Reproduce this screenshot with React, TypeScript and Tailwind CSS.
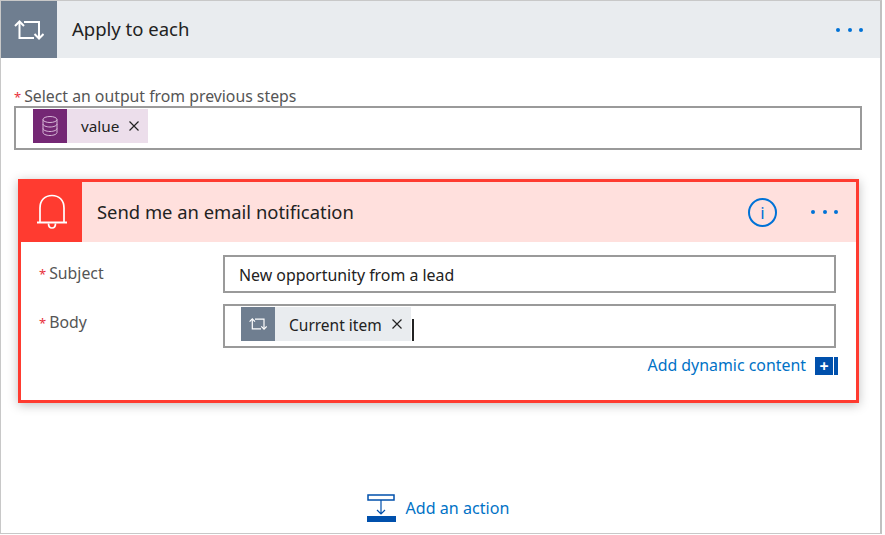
const LoopIcon = ({ className }: { className: string }) => (
  <svg viewBox="0 0 30 20" fill="none" stroke="currentColor" strokeWidth="2" className={className}>
    <path d="M5.5 2V18H20" />
    <path d="M10 2H25V18" />
    <path d="M1 6L5.5 1.5L10 6" />
    <path d="M20.5 14L25 18.5L29.5 14" />
  </svg>
);

const Dots = () => (
  <div className="flex gap-[7.5px]">
    <span className="h-[4px] w-[4px] rounded-full bg-[#0072d6]" />
    <span className="h-[4px] w-[4px] rounded-full bg-[#0072d6]" />
    <span className="h-[4px] w-[4px] rounded-full bg-[#0072d6]" />
  </div>
);

const Star = () => <span className="mr-[3px] text-[13px] text-[#e8303a]">*</span>;

const Close = () => (
  <svg viewBox="0 0 10 10" stroke="#222" strokeWidth="1.2" className="h-[10px] w-[10px]">
    <path d="M0.5 0.5L9.5 9.5M9.5 0.5L0.5 9.5" />
  </svg>
);

export default function App() {
  return (
    <div className="h-[535px] w-[885px] overflow-hidden bg-white pr-[3px] pb-[1px] font-['Noto_Sans',sans-serif] text-[#222]">
      <div className="h-full w-full border-t border-l border-r-2 border-b border-[#c8c8c8] border-r-[#c0c0c0]">
        {/* loop header */}
        <div className="flex h-[57px] items-center bg-[#e9ecef]">
          <div className="flex h-full w-[56px] items-center justify-center bg-[#6f7e90] text-white">
            <LoopIcon className="h-[20px] w-[30px]" />
          </div>
          <span className="ml-[15px] pb-[2px] text-[18.5px]">Apply to each</span>
          <div className="mr-[17px] ml-auto">
            <Dots />
          </div>
        </div>

        <div className="px-[13px] pt-[28px]">
          <div className="h-[20px] text-[15.8px] leading-[20px] text-[#555]">
            <Star />
            Select an output from previous steps
          </div>
          <div className="flex h-[44px] w-[848px] border-2 border-[#9a9a9a] pt-[1px] pl-[17px]">
            <div className="flex h-[34px] items-center bg-[#ecdeeb]">
              <div className="flex h-full w-[34px] items-center justify-center bg-[#742774] text-[#d8b8d8]">
                <svg viewBox="0 0 16 20" fill="none" stroke="currentColor" strokeWidth="1" className="h-[20px] w-[16px]">
                  <ellipse cx="8" cy="3.5" rx="7" ry="3" />
                  <path d="M1 3.5V16.5C1 18 4 19.5 8 19.5C12 19.5 15 18 15 16.5V3.5" />
                  <path d="M1 8C1 9.5 4 11 8 11C12 11 15 9.5 15 8" />
                  <path d="M1 12.5C1 14 4 15.5 8 15.5C12 15.5 15 14 15 12.5" />
                </svg>
              </div>
              <span className="ml-[14px] pt-[1px] text-[15.3px]">value</span>
              <span className="mr-[9px] ml-[10px]">
                <Close />
              </span>
            </div>
          </div>
        </div>

        {/* email action card */}
        <div className="mt-[29px] ml-[17px] h-[224px] w-[841px] border-[3px] border-[#ff3b30] shadow-[0_2px_10px_rgba(0,0,0,0.25)]">
          <div className="flex h-[60px] items-center bg-[#ffe0dd]">
            <div className="flex h-full w-[61px] items-center justify-center bg-[#ff3b30]">
              <svg viewBox="0 0 32 37" fill="none" stroke="white" strokeWidth="1.7" className="h-[37px] w-[32px]">
                <path d="M4 28V14C4 6 9 1.5 16 1.5C23 1.5 28 6 28 14V28" />
                <path d="M1 28.5H31" strokeWidth="2" />
                <path d="M12.5 29.5C12.5 35.5 19.5 35.5 19.5 29.5" />
              </svg>
            </div>
            <span className="ml-[15px] text-[18.4px]">Send me an email notification</span>
            <div className="ml-auto flex h-[29px] w-[29px] items-center justify-center rounded-full border-2 border-[#0072d6] text-[17px] leading-none text-[#0072d6]">
              i
            </div>
            <div className="mr-[18px] ml-[34px]">
              <Dots />
            </div>
          </div>

          <div className="pt-[13px] pr-[20px] pl-[18px]">
            <div className="flex">
              <div className="w-[184px] pt-[7px] text-[15.8px] text-[#555]">
                <Star />
                Subject
              </div>
              <div className="flex h-[38px] flex-1 items-center border-2 border-[#9a9a9a] pt-[4px] pl-[14px] text-[15.9px]">
                New opportunity from a lead
              </div>
            </div>
            <div className="mt-[11px] flex">
              <div className="w-[184px] pt-[7px] text-[15.8px] text-[#555]">
                <Star />
                Body
              </div>
              <div className="flex h-[44px] flex-1 border-2 border-[#9a9a9a] pt-[1px] pl-[16px]">
                <div className="flex h-[34px] items-center bg-[#e9ecef]">
                  <div className="flex h-full w-[34px] items-center justify-center bg-[#6f7e90] text-white">
                    <LoopIcon className="h-[12px] w-[18px]" />
                  </div>
                  <span className="ml-[14px] pt-[3px] text-[15.5px]">Current item</span>
                  <span className="mr-[9px] ml-[10px]">
                    <Close />
                  </span>
                </div>
                <div className="mt-[12px] ml-[1px] h-[22px] w-[2px] bg-[#222]" />
              </div>
            </div>
            <div className="mt-[6px] flex items-center justify-end">
              <span className="text-[15.9px] text-[#0072c6]">Add dynamic content</span>
              <div className="mr-[-2px] ml-[9px] flex h-[18px] w-[23px] gap-[1px]">
                <div className="flex h-full flex-1 items-center justify-center bg-[#0050ac] text-[16px] leading-none font-bold text-white">
                  +
                </div>
                <div className="h-full w-[4px] bg-[#0050ac]" />
              </div>
            </div>
          </div>
        </div>

        {/* add an action */}
        <div className="mt-[91px] flex items-center justify-center pr-[5px]">
          <svg viewBox="0 0 29 28" fill="none" className="h-[28px] w-[29px]">
            <rect x="1" y="1" width="26" height="5" stroke="#0050ac" strokeWidth="1.5" />
            <path d="M14 6V20M10 16L14 20L18 16" stroke="#0050ac" strokeWidth="1.2" />
            <rect x="0" y="22" width="29" height="6" fill="#0050ac" />
          </svg>
          <span className="ml-[10px] pt-[1px] text-[16.1px] text-[#0072c6]">Add an action</span>
        </div>
      </div>
    </div>
  );
}
